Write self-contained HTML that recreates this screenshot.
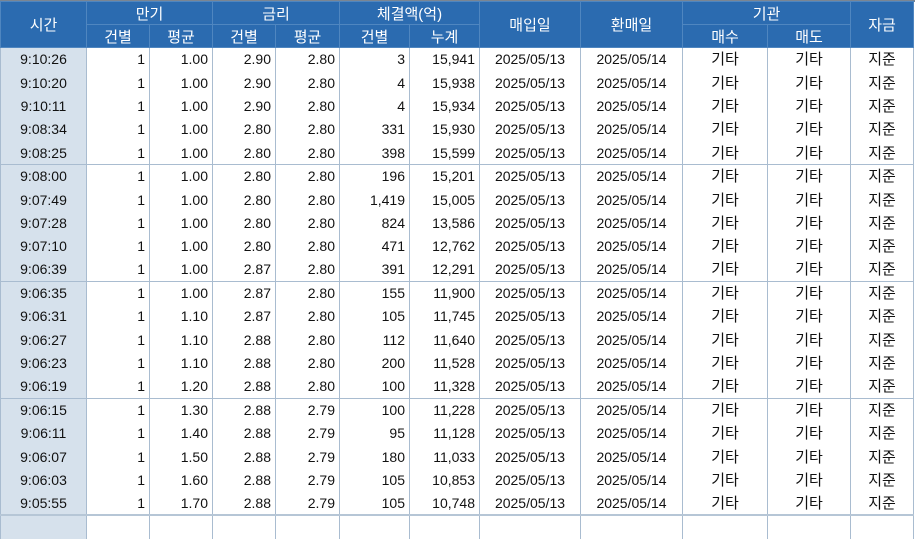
<!DOCTYPE html><html><head><meta charset="utf-8"><style>
body{margin:0;width:915px;height:522px;overflow:hidden;background:#fff;font-family:"Liberation Sans","Noto Sans CJK KR",sans-serif;font-size:14px;color:#111}
.top{position:absolute;left:0;top:0;width:915px;height:2px;background:#7a8592}
table{position:absolute;left:0;top:1px;border-collapse:collapse;table-layout:fixed}
td,th{padding:0;white-space:nowrap;overflow:hidden}
th{background:#2b6bb0;color:#fff;font-weight:normal;font-size:15px;height:22px;border:1px solid #4f86c0}
tr.d{height:23.4px}
td{border-left:1px solid #a9bcd0;border-right:1px solid #a9bcd0;text-align:right;padding-right:4px;line-height:20px}
td.t{background:#d6e1ec;text-align:center;padding:0}
td.c{text-align:center;padding:0}
td.k{text-align:center;padding:0;font-size:15px;line-height:20px;position:relative;top:1px}
tr.g td{border-bottom:1px solid #a9bcd0}
tr.last td{border-bottom:2px solid #b6c6d6}
</style></head><body><div class="top"></div>
<table>
<colgroup><col style="width:86px"><col style="width:63px"><col style="width:63px"><col style="width:63px"><col style="width:64px"><col style="width:70px"><col style="width:70px"><col style="width:101px"><col style="width:102px"><col style="width:85px"><col style="width:83px"><col style="width:63px"></colgroup>
<tr><th rowspan="2">시간</th><th colspan="2">만기</th><th colspan="2">금리</th><th colspan="2">체결액(억)</th><th rowspan="2">매입일</th><th rowspan="2">환매일</th><th colspan="2">기관</th><th rowspan="2">자금</th></tr>
<tr><th>건별</th><th>평균</th><th>건별</th><th>평균</th><th>건별</th><th>누계</th><th>매수</th><th>매도</th></tr>
<tr class="d"><td class="t">9:10:26</td><td>1</td><td>1.00</td><td>2.90</td><td>2.80</td><td>3</td><td>15,941</td><td class="c">2025/05/13</td><td class="c">2025/05/14</td><td class="k">기타</td><td class="k">기타</td><td class="k">지준</td></tr>
<tr class="d"><td class="t">9:10:20</td><td>1</td><td>1.00</td><td>2.90</td><td>2.80</td><td>4</td><td>15,938</td><td class="c">2025/05/13</td><td class="c">2025/05/14</td><td class="k">기타</td><td class="k">기타</td><td class="k">지준</td></tr>
<tr class="d"><td class="t">9:10:11</td><td>1</td><td>1.00</td><td>2.90</td><td>2.80</td><td>4</td><td>15,934</td><td class="c">2025/05/13</td><td class="c">2025/05/14</td><td class="k">기타</td><td class="k">기타</td><td class="k">지준</td></tr>
<tr class="d"><td class="t">9:08:34</td><td>1</td><td>1.00</td><td>2.80</td><td>2.80</td><td>331</td><td>15,930</td><td class="c">2025/05/13</td><td class="c">2025/05/14</td><td class="k">기타</td><td class="k">기타</td><td class="k">지준</td></tr>
<tr class="d g"><td class="t">9:08:25</td><td>1</td><td>1.00</td><td>2.80</td><td>2.80</td><td>398</td><td>15,599</td><td class="c">2025/05/13</td><td class="c">2025/05/14</td><td class="k">기타</td><td class="k">기타</td><td class="k">지준</td></tr>
<tr class="d"><td class="t">9:08:00</td><td>1</td><td>1.00</td><td>2.80</td><td>2.80</td><td>196</td><td>15,201</td><td class="c">2025/05/13</td><td class="c">2025/05/14</td><td class="k">기타</td><td class="k">기타</td><td class="k">지준</td></tr>
<tr class="d"><td class="t">9:07:49</td><td>1</td><td>1.00</td><td>2.80</td><td>2.80</td><td>1,419</td><td>15,005</td><td class="c">2025/05/13</td><td class="c">2025/05/14</td><td class="k">기타</td><td class="k">기타</td><td class="k">지준</td></tr>
<tr class="d"><td class="t">9:07:28</td><td>1</td><td>1.00</td><td>2.80</td><td>2.80</td><td>824</td><td>13,586</td><td class="c">2025/05/13</td><td class="c">2025/05/14</td><td class="k">기타</td><td class="k">기타</td><td class="k">지준</td></tr>
<tr class="d"><td class="t">9:07:10</td><td>1</td><td>1.00</td><td>2.80</td><td>2.80</td><td>471</td><td>12,762</td><td class="c">2025/05/13</td><td class="c">2025/05/14</td><td class="k">기타</td><td class="k">기타</td><td class="k">지준</td></tr>
<tr class="d g"><td class="t">9:06:39</td><td>1</td><td>1.00</td><td>2.87</td><td>2.80</td><td>391</td><td>12,291</td><td class="c">2025/05/13</td><td class="c">2025/05/14</td><td class="k">기타</td><td class="k">기타</td><td class="k">지준</td></tr>
<tr class="d"><td class="t">9:06:35</td><td>1</td><td>1.00</td><td>2.87</td><td>2.80</td><td>155</td><td>11,900</td><td class="c">2025/05/13</td><td class="c">2025/05/14</td><td class="k">기타</td><td class="k">기타</td><td class="k">지준</td></tr>
<tr class="d"><td class="t">9:06:31</td><td>1</td><td>1.10</td><td>2.87</td><td>2.80</td><td>105</td><td>11,745</td><td class="c">2025/05/13</td><td class="c">2025/05/14</td><td class="k">기타</td><td class="k">기타</td><td class="k">지준</td></tr>
<tr class="d"><td class="t">9:06:27</td><td>1</td><td>1.10</td><td>2.88</td><td>2.80</td><td>112</td><td>11,640</td><td class="c">2025/05/13</td><td class="c">2025/05/14</td><td class="k">기타</td><td class="k">기타</td><td class="k">지준</td></tr>
<tr class="d"><td class="t">9:06:23</td><td>1</td><td>1.10</td><td>2.88</td><td>2.80</td><td>200</td><td>11,528</td><td class="c">2025/05/13</td><td class="c">2025/05/14</td><td class="k">기타</td><td class="k">기타</td><td class="k">지준</td></tr>
<tr class="d g"><td class="t">9:06:19</td><td>1</td><td>1.20</td><td>2.88</td><td>2.80</td><td>100</td><td>11,328</td><td class="c">2025/05/13</td><td class="c">2025/05/14</td><td class="k">기타</td><td class="k">기타</td><td class="k">지준</td></tr>
<tr class="d"><td class="t">9:06:15</td><td>1</td><td>1.30</td><td>2.88</td><td>2.79</td><td>100</td><td>11,228</td><td class="c">2025/05/13</td><td class="c">2025/05/14</td><td class="k">기타</td><td class="k">기타</td><td class="k">지준</td></tr>
<tr class="d"><td class="t">9:06:11</td><td>1</td><td>1.40</td><td>2.88</td><td>2.79</td><td>95</td><td>11,128</td><td class="c">2025/05/13</td><td class="c">2025/05/14</td><td class="k">기타</td><td class="k">기타</td><td class="k">지준</td></tr>
<tr class="d"><td class="t">9:06:07</td><td>1</td><td>1.50</td><td>2.88</td><td>2.79</td><td>180</td><td>11,033</td><td class="c">2025/05/13</td><td class="c">2025/05/14</td><td class="k">기타</td><td class="k">기타</td><td class="k">지준</td></tr>
<tr class="d"><td class="t">9:06:03</td><td>1</td><td>1.60</td><td>2.88</td><td>2.79</td><td>105</td><td>10,853</td><td class="c">2025/05/13</td><td class="c">2025/05/14</td><td class="k">기타</td><td class="k">기타</td><td class="k">지준</td></tr>
<tr class="d last"><td class="t">9:05:55</td><td>1</td><td>1.70</td><td>2.88</td><td>2.79</td><td>105</td><td>10,748</td><td class="c">2025/05/13</td><td class="c">2025/05/14</td><td class="k">기타</td><td class="k">기타</td><td class="k">지준</td></tr>
<tr class="d"><td class="t"></td><td></td><td></td><td></td><td></td><td></td><td></td><td></td><td></td><td></td><td></td><td></td></tr>
</table></body></html>
